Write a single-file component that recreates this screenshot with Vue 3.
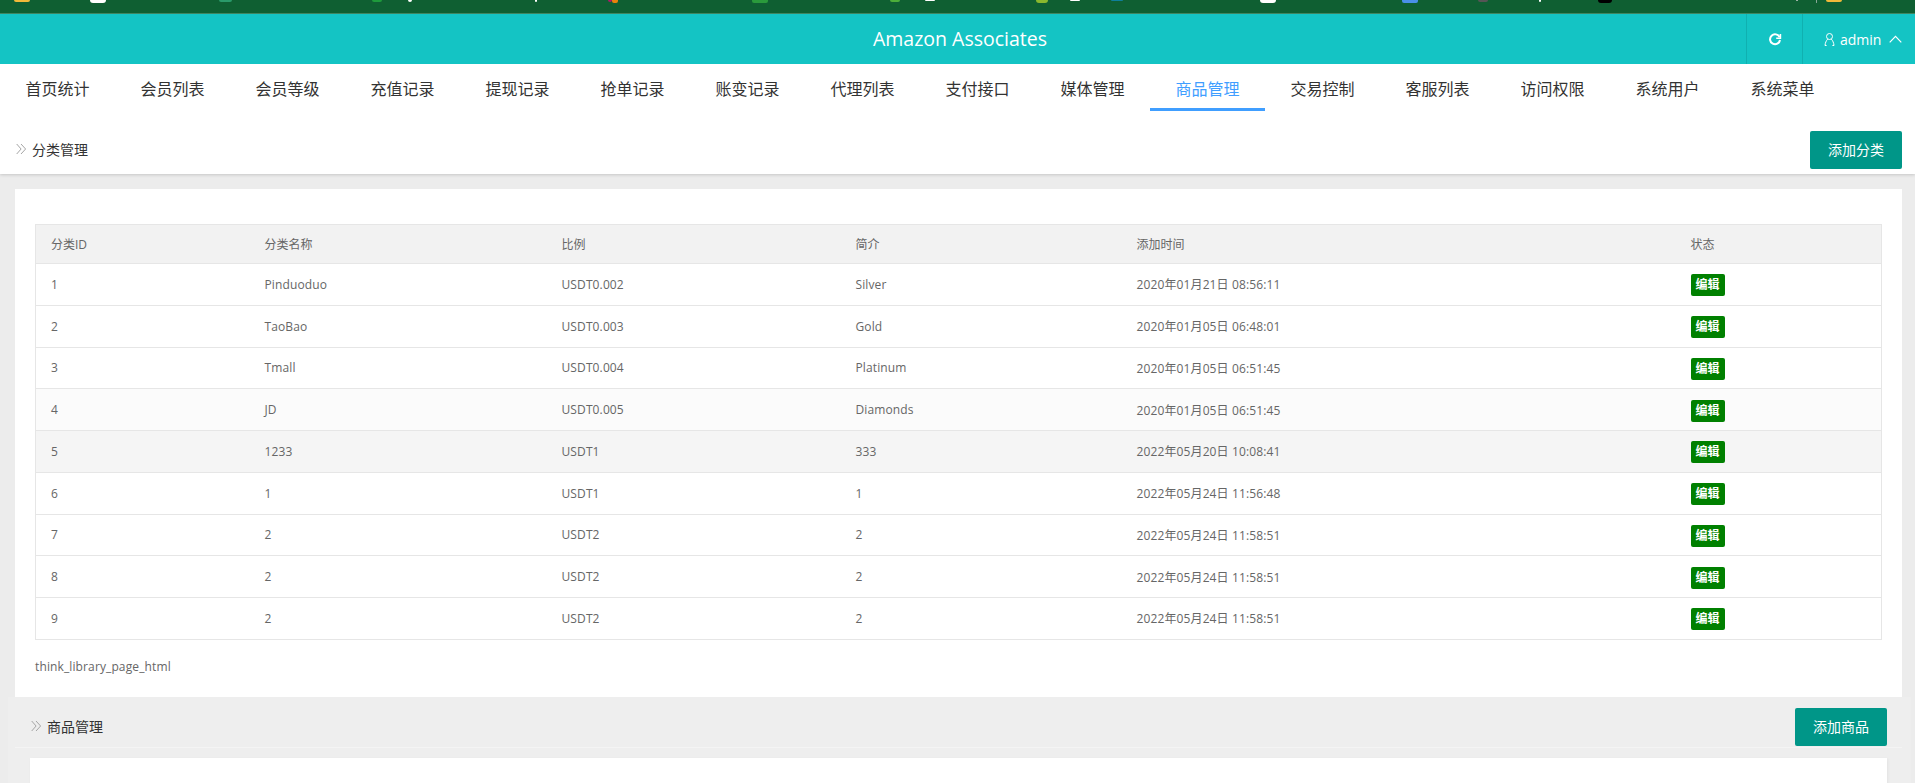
<template>
  <div class="page">
    <div class="strip">
      <i
        v-for="(b, i) in bookmarks"
        :key="i"
        class="crumb"
        :style="{ left: b[0] + 'px', width: b[1] + 'px', height: b[2] + 'px', background: b[3], borderRadius: b[4] ? '0 0 7px 7px' : '' }"
      ></i>
    </div>

    <header class="topbar">
      <div></div>
      <div class="brand">Amazon Associates</div>
      <div class="tools">
        <a class="tool tool-refresh">
          <svg width="14" height="14" viewBox="0 0 14 14" fill="none" stroke="#fff" stroke-width="2">
            <path d="M11.6 4.2A5 5 0 1 0 12 7" />
            <path d="M12.4 1v4.2H8.2" stroke-width="1.6" />
          </svg>
        </a>
        <a class="tool tool-user">
          <svg width="11" height="13" viewBox="0 0 11 13" fill="none" stroke="#fff" stroke-width="1">
            <circle cx="5.5" cy="3.5" r="3" />
            <path d="M3.7 6.1C2.2 7.6 1.2 10 1 12.5h1.6M7.3 6.1C8.8 7.6 9.8 10 10 12.5H8.4" />
          </svg>
          <span>admin</span>
          <svg class="caret" width="13" height="8" viewBox="0 0 13 8" fill="none" stroke="#fff" stroke-width="1.2">
            <path d="M.7 7.3 6.5 1.3l5.8 6" />
          </svg>
        </a>
      </div>
    </header>

    <nav class="tabs">
      <a v-for="t in tabs" :key="t" class="tab" :class="{ active: t === '商品管理' }">{{ t }}</a>
    </nav>

    <div class="subhead">
      <div class="crumbs">
        <svg width="11" height="12" viewBox="0 0 11 12" fill="none" stroke="#a5a5a5" stroke-width="1">
          <path d="M.7 1l4.4 5-4.4 5M5 1l4.6 5L5 11" />
        </svg>
        <span>分类管理</span>
      </div>
      <button class="btn">添加分类</button>
    </div>

    <section class="card">
      <table class="grid">
        <colgroup>
          <col class="c1"><col class="c2"><col class="c3"><col class="c4"><col class="c5"><col>
        </colgroup>
        <thead>
          <tr>
            <th>分类ID</th>
            <th>分类名称</th>
            <th>比例</th>
            <th>简介</th>
            <th>添加时间</th>
            <th>状态</th>
          </tr>
        </thead>
        <tbody>
          <tr v-for="r in rows" :key="r.id" :class="r.cls">
            <td>{{ r.id }}</td>
            <td>{{ r.name }}</td>
            <td>{{ r.rate }}</td>
            <td>{{ r.intro }}</td>
            <td>{{ r.time }}</td>
            <td><span class="edit">编辑</span></td>
          </tr>
        </tbody>
      </table>
      <p class="pager">think_library_page_html</p>
    </section>

    <section class="goods">
      <div class="goods-bar">
        <div class="crumbs">
          <svg width="11" height="12" viewBox="0 0 11 12" fill="none" stroke="#a5a5a5" stroke-width="1">
            <path d="M.7 1l4.4 5-4.4 5M5 1l4.6 5L5 11" />
          </svg>
          <span>商品管理</span>
        </div>
        <button class="btn">添加商品</button>
      </div>
      <div class="goods-card"></div>
    </section>
  </div>
</template>

<script setup>
const tabs = [
  '首页统计', '会员列表', '会员等级', '充值记录', '提现记录', '抢单记录', '账变记录', '代理列表',
  '支付接口', '媒体管理', '商品管理', '交易控制', '客服列表', '访问权限', '系统用户', '系统菜单'
]

const rows = [
  { id: 1, name: 'Pinduoduo', rate: 'USDT0.002', intro: 'Silver', time: '2020年01月21日 08:56:11' },
  { id: 2, name: 'TaoBao', rate: 'USDT0.003', intro: 'Gold', time: '2020年01月05日 06:48:01' },
  { id: 3, name: 'Tmall', rate: 'USDT0.004', intro: 'Platinum', time: '2020年01月05日 06:51:45' },
  { id: 4, name: 'JD', rate: 'USDT0.005', intro: 'Diamonds', time: '2020年01月05日 06:51:45', cls: 'soft' },
  { id: 5, name: '1233', rate: 'USDT1', intro: '333', time: '2022年05月20日 10:08:41', cls: 'hover' },
  { id: 6, name: '1', rate: 'USDT1', intro: '1', time: '2022年05月24日 11:56:48' },
  { id: 7, name: '2', rate: 'USDT2', intro: '2', time: '2022年05月24日 11:58:51' },
  { id: 8, name: '2', rate: 'USDT2', intro: '2', time: '2022年05月24日 11:58:51' },
  { id: 9, name: '2', rate: 'USDT2', intro: '2', time: '2022年05月24日 11:58:51' }
]

// bottoms of the browser's bookmark icons, cut off by the screenshot
const bookmarks = [
  [14, 16, 2, '#f0b93a'], [90, 16, 3, '#fff', 1], [219, 13, 2, '#2a9a6a', 1], [372, 10, 2, '#1e9a3c', 1],
  [408, 4, 2, '#fff'], [535, 2, 2, '#fff'], [608, 4, 2, '#b0186a'], [612, 6, 3, '#e8820c'],
  [752, 16, 3, '#2a9a3c'], [890, 10, 2, '#4cae3a', 1], [925, 10, 1, '#fff'], [1036, 12, 3, '#8ab82e', 1],
  [1070, 10, 1, '#fff'], [1111, 12, 1, '#0e7f9a'], [1260, 16, 3, '#fff', 1], [1402, 16, 3, '#4a90e8'],
  [1478, 10, 2, '#555', 1], [1539, 2, 2, '#fff'], [1598, 14, 3, '#000', 1], [1796, 2, 1, '#ccc'],
  [1816, 1, 3, '#8aa898'], [1826, 16, 2, '#f0b93a']
]
</script>

<style>
html, body {
  margin: 0;
  height: 100%;
  overflow: hidden;
  background: #ececec;
}
</style>

<style scoped>
.page {
  height: 783px;
  overflow: hidden;
  display: flex;
  flex-direction: column;
  background: #ececec;
  font-family: "Open Sans", "Noto Sans CJK SC", sans-serif;
  color: #333;
}

.strip {
  position: relative;
  flex: none;
  height: 13px;
  background: #0f5f32;
  border-bottom: 1px solid #3f8560;
}

.crumb {
  position: absolute;
  top: 0;
  border-radius: 0 0 2px 2px;
}

.topbar {
  flex: none;
  height: 50px;
  display: grid;
  grid-template-columns: 1fr auto 1fr;
  background: #14c4c4;
  color: #fff;
}

.brand {
  padding-left: 5px;
  font-size: 19.5px;
  line-height: 50px;
  text-align: center;
}

.tools {
  display: flex;
  justify-content: flex-end;
}

.tool {
  display: flex;
  align-items: center;
  border-left: 1px solid #10b0b0;
  font-size: 14px;
}

.tool-refresh {
  width: 55px;
  justify-content: center;
}

.tool-refresh svg {
  margin-top: 1px;
}

.tool-user {
  width: 113px;
  gap: 5px;
  padding-left: 21px;
  box-sizing: border-box;
}

.caret {
  margin-left: 3px;
}

.tabs {
  flex: none;
  position: relative;
  z-index: 1;
  display: flex;
  height: 47px;
  background: #fff;
}

.tab {
  flex: none;
  box-sizing: border-box;
  width: 115px;
  height: 47px;
  padding-top: 13px;
  font-size: 16px;
  line-height: 24px;
  text-align: center;
  color: #333;
}

.tab.active {
  color: #409eff;
  border-bottom: 3px solid #409eff;
}

.subhead {
  flex: none;
  height: 43px;
  padding: 20px 13px 0 16px;
  display: flex;
  justify-content: space-between;
  background: #fff;
  box-shadow: 0 1px 3px rgba(0, 0, 0, .16);
}

.crumbs {
  display: flex;
  align-items: center;
  gap: 5px;
  box-sizing: border-box;
  height: 38px;
  padding-bottom: 2px;
  font-size: 14px;
  color: #333;
}

.btn {
  width: 92px;
  height: 38px;
  padding: 0 0 2px;
  border: 0;
  border-radius: 2px;
  background: #009688;
  color: #fff;
  font-family: inherit;
  font-size: 14px;
}

.card {
  flex: none;
  box-sizing: border-box;
  height: 508px;
  margin: 15px 13px 0 15px;
  padding: 35px 20px 0;
  background: #fff;
}

.grid {
  width: 100%;
  table-layout: fixed;
  border-collapse: collapse;
  font-size: 12px;
  letter-spacing: .12px;
  color: #666;
}

.c1 { width: 214px; }
.c2 { width: 297px; }
.c3 { width: 294px; }
.c4 { width: 281px; }
.c5 { width: 554px; }

.grid th,
.grid td {
  padding: 0 15px;
  border: 1px solid #e6e6e6;
  border-width: 1px 0;
  text-align: left;
  font-weight: 400;
}

.grid tr > :first-child { border-left-width: 1px; }
.grid tr > :last-child { border-right-width: 1px; }

.grid th {
  height: 38px;
  background: #f2f2f2;
  letter-spacing: 0;
}

.grid td {
  height: 40.75px;
}

.soft td { background: #fbfbfb; }
.hover td { background: #f5f5f5; }

.edit {
  display: block;
  width: 34px;
  height: 22px;
  margin: 1px 0 -1px;
  border-radius: 2px;
  background: #008000;
  color: #fff;
  font-weight: 700;
  letter-spacing: 0;
  line-height: 22px;
  text-align: center;
}

.pager {
  margin: 18px 0 0;
  font-size: 12px;
  letter-spacing: .12px;
  line-height: 18px;
  color: #666;
}

.goods {
  flex: 1;
  margin: 0 4px 0 8px;
  padding: 0 9px 0 7px;
  background: #eee;
}

.goods-bar {
  box-sizing: border-box;
  height: 51px;
  padding: 11px 15px 1px 16px;
  display: flex;
  justify-content: space-between;
  border-bottom: 1px solid #f4f4f4;
}

.goods-card {
  height: 40px;
  margin: 10px 15px 0;
  background: #fff;
  box-shadow: 1px 1px 3px rgba(0, 0, 0, .05);
}
</style>
